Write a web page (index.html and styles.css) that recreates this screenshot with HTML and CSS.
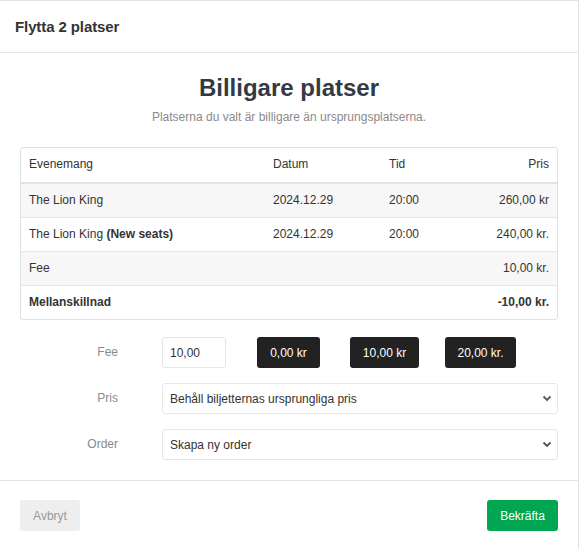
FILE: index.html
```html
<!DOCTYPE html>
<html lang="sv">
<head>
<meta charset="utf-8">
<title>Flytta 2 platser</title>
<link rel="stylesheet" href="styles.css">
</head>
<body>
<div class="modal">
  <div class="modal-header">
    <h4 class="modal-title">Flytta 2 platser</h4>
  </div>
  <div class="modal-body">
    <h2 class="heading">Billigare platser</h2>
    <p class="subtitle">Platserna du valt är billigare än ursprungsplatserna.</p>
    <div class="table-wrap">
      <table class="table">
        <thead>
          <tr>
            <th class="c-event">Evenemang</th>
            <th class="c-date">Datum</th>
            <th class="c-time">Tid</th>
            <th class="c-price">Pris</th>
          </tr>
        </thead>
        <tbody>
          <tr class="striped">
            <td>The Lion King</td>
            <td>2024.12.29</td>
            <td>20:00</td>
            <td class="c-price">260,00 kr</td>
          </tr>
          <tr>
            <td>The Lion King <b>(New seats)</b></td>
            <td>2024.12.29</td>
            <td>20:00</td>
            <td class="c-price">240,00 kr.</td>
          </tr>
          <tr class="striped">
            <td>Fee</td>
            <td></td>
            <td></td>
            <td class="c-price">10,00 kr.</td>
          </tr>
          <tr>
            <td><b>Mellanskillnad</b></td>
            <td></td>
            <td></td>
            <td class="c-price"><b>-10,00 kr.</b></td>
          </tr>
        </tbody>
      </table>
    </div>
    <form class="form">
      <div class="form-row">
        <label class="form-label">Fee</label>
        <div class="fee-controls">
          <input class="input fee-input" type="text" value="10,00">
          <button type="button" class="btn btn-dark b1">0,00 kr</button>
          <button type="button" class="btn btn-dark b2">10,00 kr</button>
          <button type="button" class="btn btn-dark b3">20,00 kr.</button>
        </div>
      </div>
      <div class="form-row">
        <label class="form-label">Pris</label>
        <div class="select-wrap">
          <select class="input select">
            <option>Behåll biljetternas ursprungliga pris</option>
          </select>
          <svg class="chevron" width="10" height="7" viewBox="0 0 10 7"><path d="M1.5 1.5 L5 5 L8.5 1.5" fill="none" stroke="#555" stroke-width="1.8"/></svg>
        </div>
      </div>
      <div class="form-row">
        <label class="form-label">Order</label>
        <div class="select-wrap">
          <select class="input select">
            <option>Skapa ny order</option>
          </select>
          <svg class="chevron" width="10" height="7" viewBox="0 0 10 7"><path d="M1.5 1.5 L5 5 L8.5 1.5" fill="none" stroke="#555" stroke-width="1.8"/></svg>
        </div>
      </div>
    </form>
  </div>
  <div class="modal-footer">
    <button type="button" class="btn btn-cancel">Avbryt</button>
    <button type="button" class="btn btn-success">Bekräfta</button>
  </div>
</div>
</body>
</html>
```
FILE: styles.css
```css
* { box-sizing: border-box; }
html, body {
  margin: 0;
  padding: 0;
  background: #fff;
  font-family: "Liberation Sans", Arial, sans-serif;
  color: #333;
}
.modal {
  width: 579px;
  height: 549px;
  border-top: 1px solid #e2e2e2;
  border-right: 1px solid #e2e2e2;
  background: #fff;
}
.modal-header {
  height: 52px;
  border-bottom: 1px solid #e5e5e5;
  padding: 0 15px;
  display: flex;
  align-items: center;
}
.modal-title {
  margin: 0;
  font-size: 15px;
  font-weight: bold;
  color: #333;
  letter-spacing: -0.1px;
}
.modal-body {
  padding: 20px 20px 20px 20px;
  height: 428px;
  border-bottom: 1px solid #e5e5e5;
}
.heading {
  margin: 0;
  text-align: center;
  font-size: 24px;
  line-height: 30px;
  font-weight: bold;
  color: #333a44;
}
.subtitle {
  margin: 6px 0 0;
  text-align: center;
  font-size: 12px;
  line-height: 17px;
  color: #8a8a8a;
}
.table-wrap {
  margin-top: 21px;
  border: 1px solid #e0e0e0;
  border-radius: 3px;
  overflow: hidden;
}
.table {
  width: 100%;
  border-collapse: collapse;
  font-size: 12px;
  line-height: 17px;
  color: #333;
}
.table th, .table td {
  padding: 8px 8px;
  text-align: left;
  font-weight: normal;
  vertical-align: top;
}
.table thead th {
  border-bottom: 2px solid #e2e2e2;
  padding-top: 8px;
  padding-bottom: 9px;
}
.table tbody td {
  border-top: 1px solid #e6e6e6;
}
.table tbody tr:first-child td { border-top: none; }
.table tr.striped td { background: #f7f7f7; }
.c-event { width: 244px; }
.c-date { width: 116px; }
.table .c-price { text-align: right; }
.table b { font-weight: bold; }
.form {
  margin-top: 17px;
  display: flex;
  flex-direction: column;
  gap: 15px;
}
.form-row {
  display: flex;
  align-items: center;
}
.form-label {
  width: 98px;
  margin-right: 44px;
  text-align: right;
  font-size: 12px;
  color: #8a8a8a;
  padding-bottom: 2px;
}
.fee-controls {
  display: flex;
  align-items: center;
}
.input {
  height: 31px;
  border: 1px solid #e6e6e6;
  border-radius: 3px;
  background: #fff;
  font-family: "Liberation Sans", Arial, sans-serif;
  font-size: 12px;
  color: #333;
  padding: 0 7px;
}
.fee-input { width: 64px; }
.btn {
  height: 31px;
  border: none;
  border-radius: 3px;
  font-family: "Liberation Sans", Arial, sans-serif;
  font-size: 12px;
  padding: 0;
  cursor: pointer;
}
.btn-dark {
  background: #222;
  color: #fff;
}
.b1 { width: 63px; margin-left: 31px; }
.b2 { width: 69px; margin-left: 30px; }
.b3 { width: 71px; margin-left: 26px; }
.select-wrap {
  position: relative;
  flex: 1;
}
.select {
  width: 100%;
  appearance: none;
  -webkit-appearance: none;
  padding-left: 7px;
}
.chevron {
  position: absolute;
  right: 6px;
  top: 12px;
  pointer-events: none;
}
.modal-footer {
  display: flex;
  justify-content: space-between;
  padding: 19px 20px;
}
.btn-cancel {
  width: 60px;
  background: #eeeeee;
  color: #999;
  font-size: 12px;
}
.btn-success {
  width: 71px;
  background: #00a651;
  color: #fff;
  font-size: 12px;
}
```
